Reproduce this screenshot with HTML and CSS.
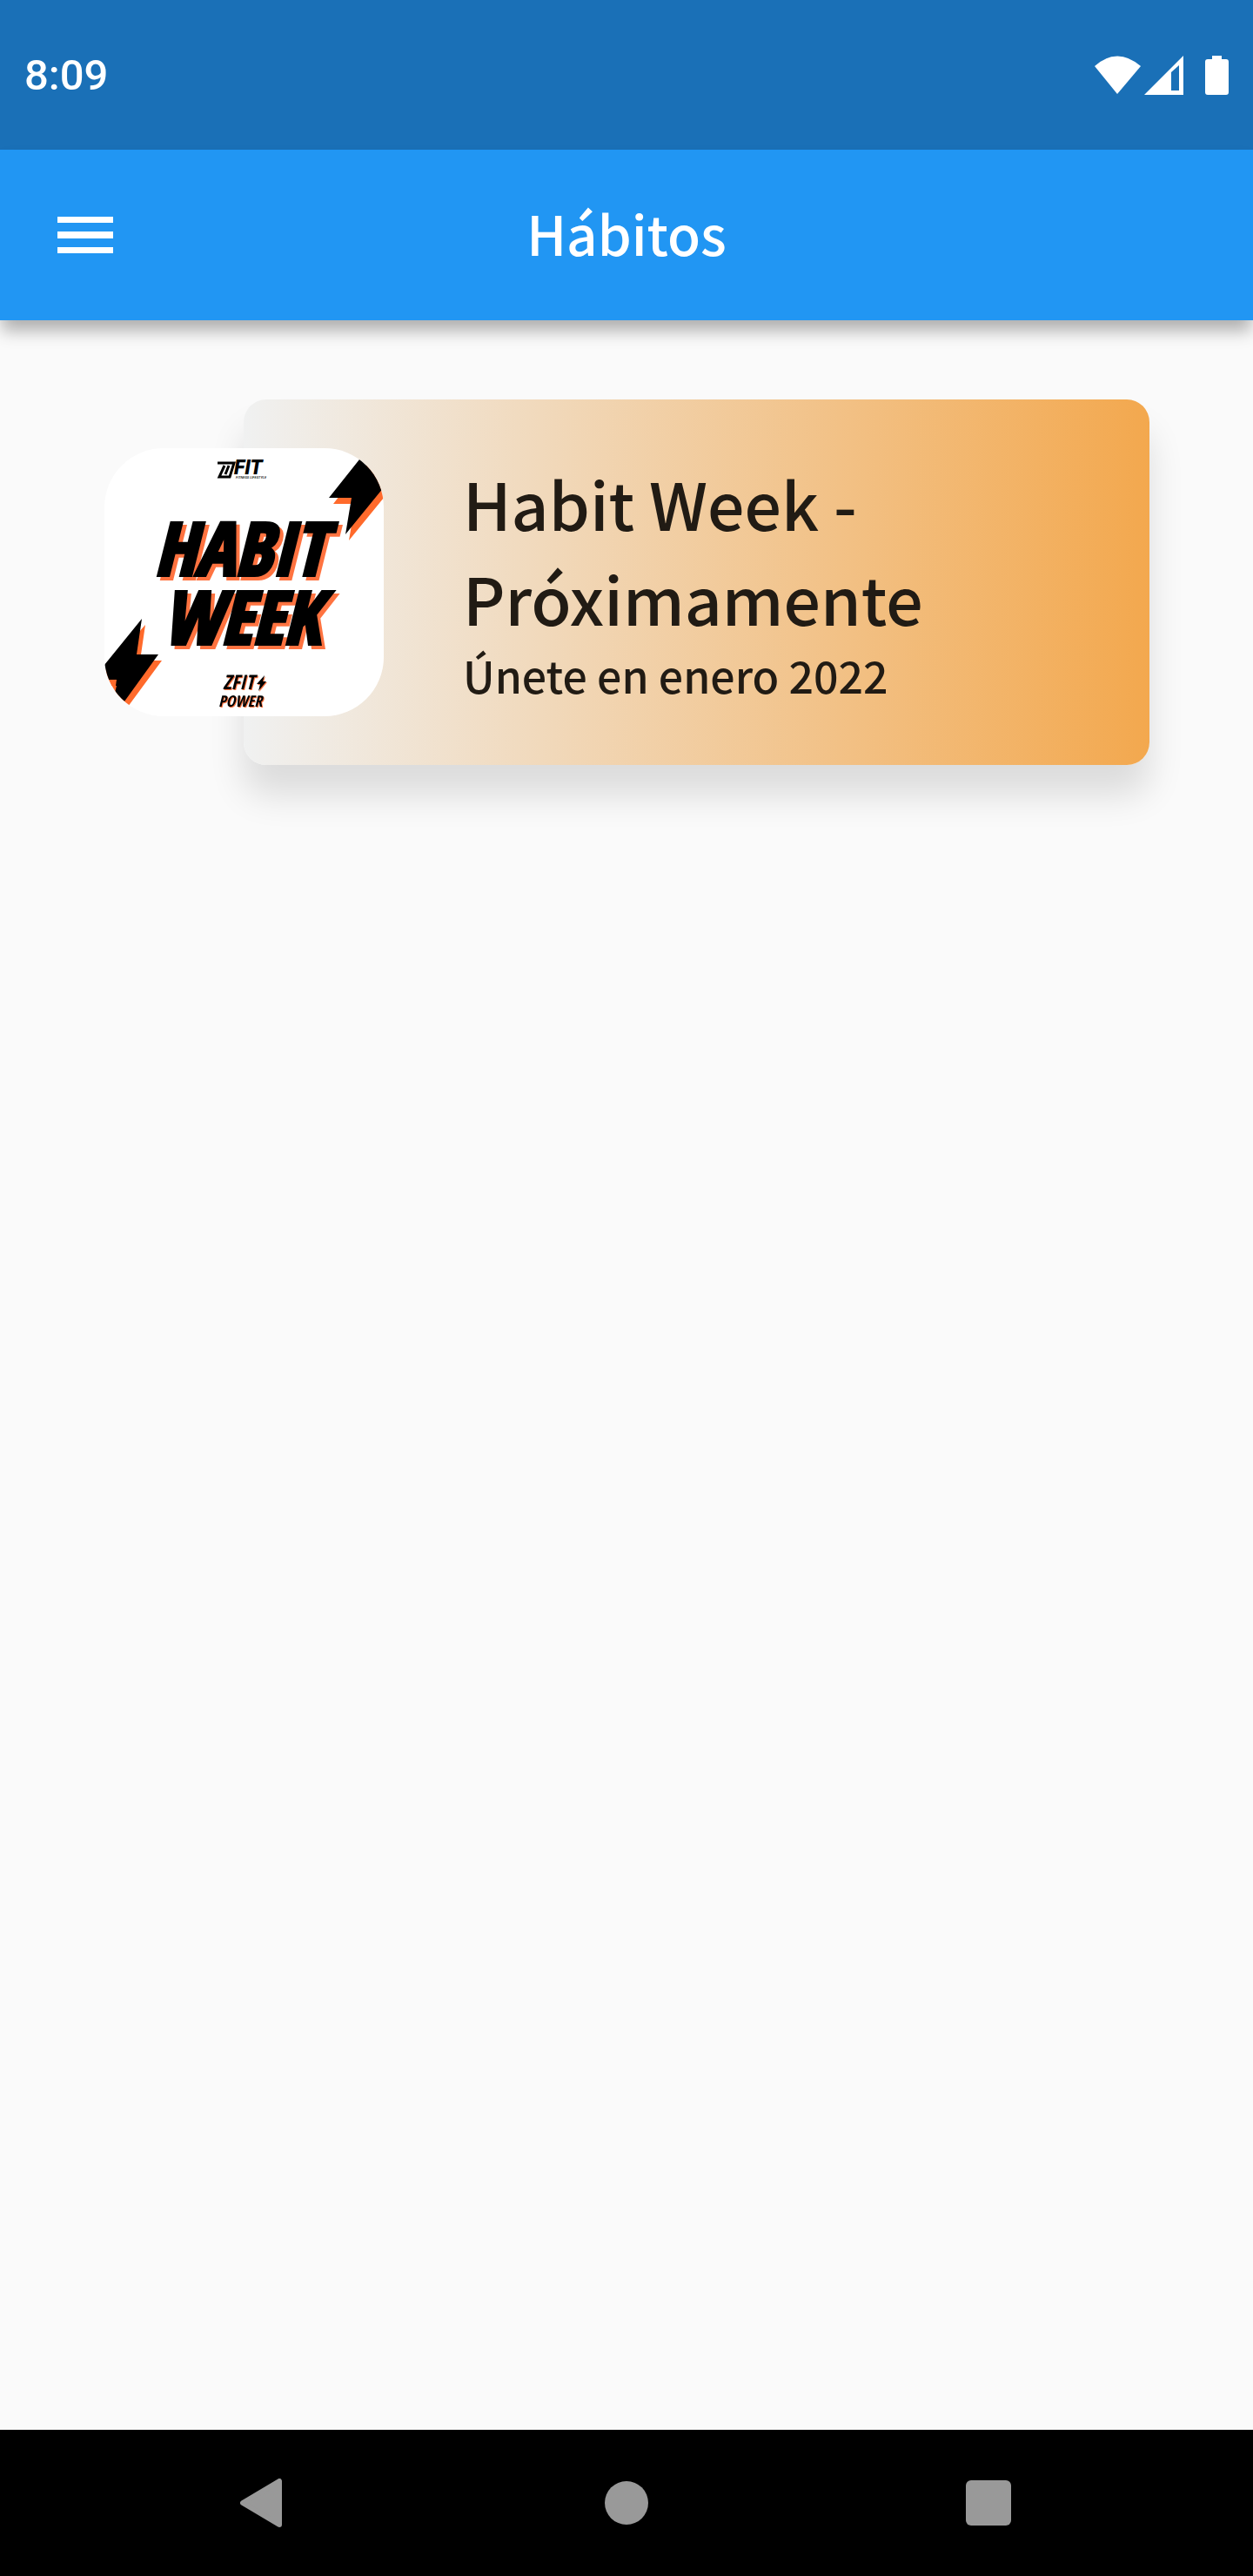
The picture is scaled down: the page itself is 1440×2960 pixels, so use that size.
FILE: index.html
```html
<!DOCTYPE html>
<html lang="es">
<head>
    <meta charset="utf-8">
    <meta name="viewport" content="width=device-width, initial-scale=1">
    <title>Hábitos</title>
    <link rel="stylesheet" href="styles.css">
</head>
<body>
    <div class="status-bar">
        <span class="time">8:09</span>
        <svg class="status-icons" width="160" height="50" viewBox="0 0 160 50" fill="#fff">
            <path d="M4 15 Q30 -8 57 15 L30 47 Z" />
            <path fill-rule="evenodd" d="M61 48 L106 3 V48 Z M92 22 V43 H101 V14 Z" />
            <path d="M139 3 H150 V7 H155 Q158 7 158 10 V45 Q158 48 155 48 H134 Q131 48 131 45 V10 Q131 7 134 7 H139 Z" />
        </svg>
    </div>

    <header class="app-bar">
        <button class="menu-button" aria-label="Menú">
            <svg width="64" height="42" viewBox="0 0 64 42" fill="#fff">
                <rect width="64" height="7" />
                <rect y="17" width="64" height="8" />
                <rect y="35" width="64" height="7" />
            </svg>
        </button>
        <h1>Hábitos</h1>
    </header>

    <main class="content">
        <a class="habit" href="#">
            <svg class="habit-logo" width="321" height="308" viewBox="0 0 321 308">
                <rect width="321" height="308" fill="#fff" />

                <!-- bolts -->
                <g fill="#ff6a2b">
                    <path d="M297 20 L263 64 H288 L281 106 L325 52 V20 Z" />
                    <path d="M47 203 L41 244 H66 L27 297 L0 297 V256 Z" />
                </g>
                <path d="M293 13 L258 57 H284 L277 99 L325 40 V0 H303 Z" />
                <path d="M43 196 L37 237 H62 L23 291 L12 281 L14 273 H9 L7 266 H0 V249 Z" />
                <path d="M5 266 H14 L13 273 H8 Z" fill="#ff6a2b" />

                <!-- top brand -->
                <path d="M130 17 H149 L144 33 H132 L138 20 M143 20 L139 30" fill="none" stroke="#000" stroke-width="3" />
                <text class="brand brand-wide" x="149" y="30">FIT</text>
                <text class="tagline" x="151" y="35">FITNESS LIFESTYLE</text>

                <g class="logo-text">
                    <text x="57" y="146">HABIT</text>
                    <text x="67" y="225">WEEK</text>
                </g>

                <!-- bottom brand -->
                <g class="brand brand-power">
                    <text x="136" y="277" font-size="23">ZFIT</text>
                    <text x="131" y="297" font-size="18">POWER</text>
                    <path d="M184 261 L175 271 H179 L177 279 L186 268 H182 Z" />
                </g>
            </svg>
            <div class="habit-card">
                <h2>Habit Week - Próximamente</h2>
                <p>Únete en enero 2022</p>
            </div>
        </a>
    </main>

    <nav class="nav-bar">
        <button aria-label="Atrás">
            <svg width="56" height="56" viewBox="0 0 56 56">
                <path d="M3 28 L45 3 V53 Z" />
            </svg>
        </button>
        <button aria-label="Inicio">
            <svg width="56" height="56" viewBox="0 0 56 56"><circle cx="28" cy="28" r="25" /></svg>
        </button>
        <button aria-label="Recientes">
            <svg width="56" height="56" viewBox="0 0 56 56"><rect x="2" y="2" width="52" height="52" rx="6" /></svg>
        </button>
    </nav>
</body>
</html>
```
FILE: styles.css
```css
body {
    display: flex;
    flex-direction: column;
    min-height: 100vh;
    margin: 0;
    background: #fafafa;
    color: #211b14;
    font-family: "Noto Sans CJK JP", "Noto Sans", sans-serif;
    font-weight: 500;
}

button {
    display: flex;
    align-items: center;
    justify-content: center;
    padding: 0;
    border: none;
    background: none;
    cursor: pointer;
}

.status-bar {
    display: flex;
    align-items: center;
    justify-content: space-between;
    height: 172px;
    padding: 0 26px 0 28px;
    background: #1a70b7;
    color: #fff;
}

.time {
    font-family: Roboto, sans-serif;
    font-size: 49px;
}

.app-bar {
    display: grid;
    grid-template-columns: 196px 1fr 196px;
    height: 196px;
    background: #2196f3;
    color: #fff;
    box-shadow: 0 14px 18px -2px rgba(0,0,0,0.3);
}

.app-bar h1 {
    margin: 0;
    font-size: 62px;
    font-weight: 500;
    line-height: 190px;
    text-align: center;
}

.content {
    flex: 1;
    padding: 91px 119px 91px 120px;
}

.habit {
    display: flex;
    align-items: center;
    color: inherit;
    text-decoration: none;
}

.habit-logo {
    position: relative;
    flex: none;
    margin-right: -161px;
    border-radius: 68px;
}

.habit-card {
    flex: 1;
    box-sizing: border-box;
    padding: 64px 180px 70px 252px;
    border-radius: 26px;
    background: linear-gradient(to right, #f0f1f1, #f3a84e);
    box-shadow: 0 35px 40px rgba(0,0,0,0.12);
}

.habit-card h2 {
    margin: 0;
    font-size: 75px;
    font-weight: 500;
    line-height: 109px;
}

.habit-card p {
    margin: 0;
    font-size: 50px;
    line-height: 68px;
}

.logo-text,
.brand {
    font-family: "Noto Sans ExtraCondensed", "Open Sans Condensed", "Roboto Condensed", Roboto, sans-serif;
    font-style: italic;
    font-weight: 900;
}

.logo-text {
    font-size: 84px;
    stroke: #000;
    stroke-width: 4px;
    filter: drop-shadow(4px 4px 0 #ff7340);
}

.brand-wide {
    font-family: Roboto, sans-serif;
    font-size: 23px;
}

.brand-power {
    filter: drop-shadow(1px 1px 0 #ff7340);
}

.tagline {
    font-family: Roboto, sans-serif;
    font-size: 4px;
    font-style: italic;
}

.nav-bar {
    display: grid;
    grid-template-columns: repeat(3, 1fr);
    height: 168px;
    padding: 0 96px;
    background: #000;
}

.nav-bar svg {
    fill: #999;
}

.nav-bar path {
    stroke: #999;
    stroke-width: 6px;
    stroke-linejoin: round;
}
```
